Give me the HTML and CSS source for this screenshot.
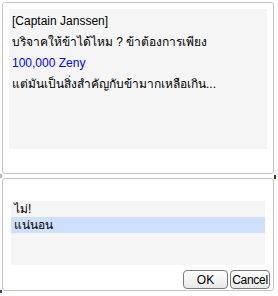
FILE: index.html
```html
<!DOCTYPE html>
<html lang="th">
<head>
    <meta charset="UTF-8">
    <title>NPC Dialog</title>
    <link rel="stylesheet" href="styles.css">
</head>
<body>
    <div class="message-box">
        <div class="message-text">
            <p>[Captain Janssen]</p>
            <p>บริจาคให้ข้าได้ไหม ? ข้าต้องการเพียง</p>
            <p class="amount">100,000 Zeny</p>
            <p>แต่มันเป็นสิ่งสำคัญกับข้ามากเหลือเกิน...</p>
        </div>
        <span class="mark mark-left"></span>
        <span class="mark mark-right"></span>
    </div>

    <div class="choice-box">
        <ul class="choice-list">
            <li>ไม่!</li>
            <li class="selected">แน่นอน</li>
        </ul>
        <div class="buttons">
            <button class="ok">OK</button>
            <button class="cancel">Cancel</button>
        </div>
        <span class="mark mark-corner"></span>
    </div>
</body>
</html>
```

FILE: styles.css
```css
body {
    margin: 0;
    padding: 2px;
    background-color: #fff;
    font-family: Tahoma, "Liberation Sans", "Noto Sans", sans-serif;
    font-size: 12px;
    color: #000;
}

.message-box, .choice-box {
    position: relative;
    width: 272px;
    border: 1px solid #c4c4c4;
    border-radius: 3px;
    background-color: #fff;
}

.message-box {
    height: 172px;
    padding: 6px;
    box-sizing: border-box;
}

.message-text {
    height: 140px;
    padding: 2px 3px;
    box-sizing: border-box;
    background-color: #f5f5f5;
}

.message-text p {
    margin: 0;
    line-height: 21px;
    white-space: nowrap;
}

.message-text .amount {
    color: #0000ff;
}

.choice-box {
    margin-top: 4px;
    height: 113px;
    box-sizing: border-box;
    padding: 22px 8px 0 8px;
}

.choice-list {
    list-style: none;
    margin: 0;
    padding: 0;
    height: 64px;
    background-color: #f5f5f5;
}

.choice-list li {
    height: 16px;
    line-height: 16px;
    padding-left: 3px;
}

.choice-list li.selected {
    background-color: #cee0fc;
}

.buttons {
    display: flex;
    justify-content: flex-end;
    gap: 2px;
    margin-top: 5px;
    margin-right: -5px;
}

.buttons button {
    height: 19px;
    padding: 0;
    font-family: inherit;
    font-size: 12px;
    color: #000;
    border: 1px solid #7a7a7a;
    border-radius: 4px;
    background: linear-gradient(#ffffff, #e8e8e8);
}

.buttons .ok {
    width: 45px;
}

.buttons .cancel {
    width: 40px;
    letter-spacing: -0.3px;
}

.mark {
    position: absolute;
    width: 2px;
    height: 4px;
}

.mark-left {
    left: -3px;
    bottom: -5px;
    background-color: #a8b8c8;
}

.mark-right {
    right: -3px;
    bottom: -6px;
    background-color: #5a2a2a;
}

.mark-corner {
    left: -3px;
    bottom: -4px;
    background-color: #2e4a66;
}
```
